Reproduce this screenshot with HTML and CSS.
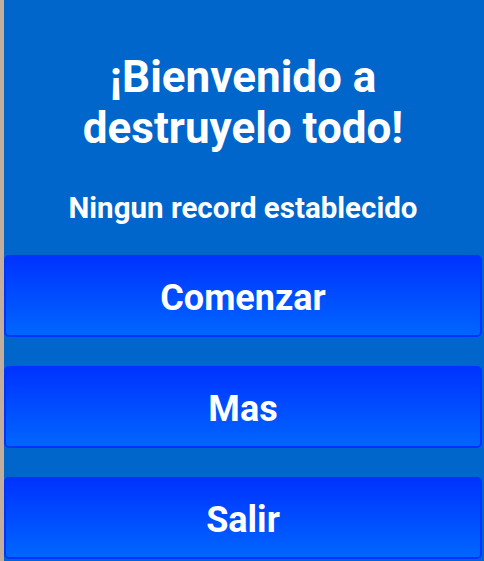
FILE: index.html
```html
<!DOCTYPE html>
<html>
<head>
<meta charset="utf-8">
<link rel="stylesheet" href="styles.css">
</head>
<body>
<div class="screen">
  <div class="edge"></div>
  <main class="content">
    <h1 class="title">¡Bienvenido a<br>destruyelo todo!</h1>
    <p class="record">Ningun record establecido</p>
    <div class="buttons">
      <button class="btn">Comenzar</button>
      <button class="btn">Mas</button>
      <button class="btn">Salir</button>
    </div>
  </main>
</div>
</body>
</html>
```

FILE: styles.css
```css
html, body {
  margin: 0;
  padding: 0;
  height: 100%;
}
body {
  background: #0066cc;
  font-family: Roboto, "Liberation Sans", sans-serif;
  overflow: hidden;
}
.screen {
  display: flex;
  height: 561px;
}
.edge {
  width: 4px;
  flex: none;
  background: #c3ae9d;
}
.content {
  flex: 1;
  display: flex;
  flex-direction: column;
  align-items: stretch;
  padding-right: 2px;
}
.title {
  margin: 52px 0 0;
  text-align: center;
  color: #fff;
  font-weight: 700;
  font-size: 44px;
  line-height: 51px;
}
.record {
  margin: 36px 0 0;
  text-align: center;
  color: #fff;
  font-weight: 700;
  font-size: 29.5px;
  line-height: 37px;
}
.buttons {
  margin-top: 28px;
  display: flex;
  flex-direction: column;
  gap: 29px;
}
.btn {
  height: 82px;
  border: 2px solid #0033ff;
  border-radius: 5px;
  background: linear-gradient(#0033ff, #0066ff);
  color: #fff;
  font-family: Roboto, "Liberation Sans", sans-serif;
  font-weight: 700;
  font-size: 36px;
  padding: 4px 0 0;
}
```
